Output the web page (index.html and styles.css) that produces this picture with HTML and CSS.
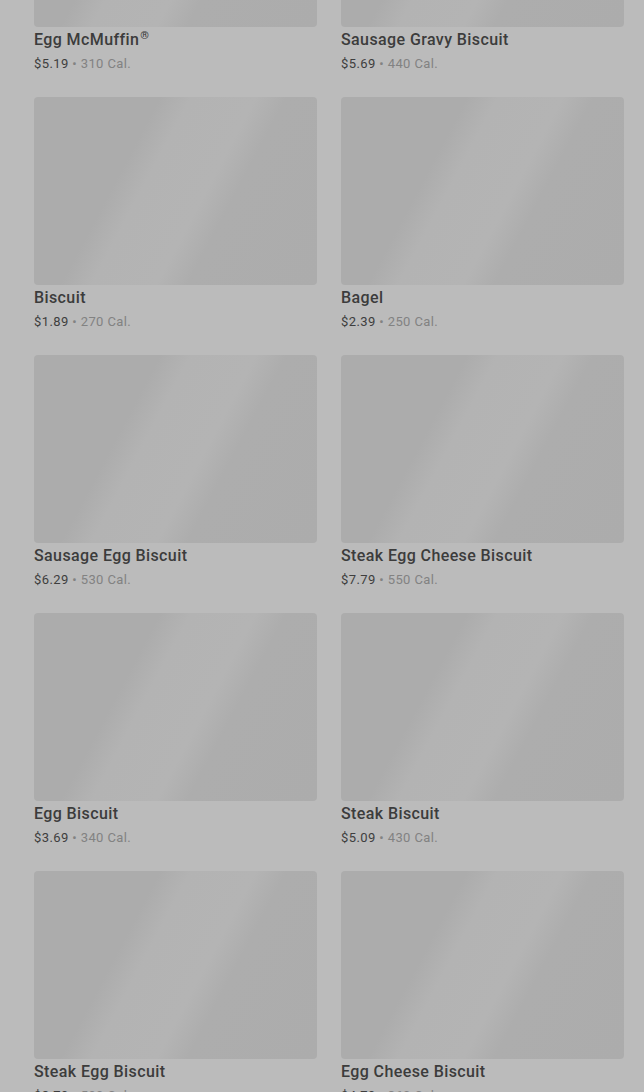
FILE: index.html
```html
<!DOCTYPE html>
<html>
<head>
<meta charset="utf-8">
<link rel="stylesheet" href="styles.css">
</head>
<body>
<main class="grid">
  <div class="card"><div class="img"></div><div class="title">Egg McMuffin<sup>®</sup></div><div class="meta"><span class="price">$5.19</span> • 310 Cal.</div></div>
  <div class="card"><div class="img"></div><div class="title">Sausage Gravy Biscuit</div><div class="meta"><span class="price">$5.69</span> • 440 Cal.</div></div>
  <div class="card"><div class="img"></div><div class="title">Biscuit</div><div class="meta"><span class="price">$1.89</span> • 270 Cal.</div></div>
  <div class="card"><div class="img"></div><div class="title">Bagel</div><div class="meta"><span class="price">$2.39</span> • 250 Cal.</div></div>
  <div class="card"><div class="img"></div><div class="title">Sausage Egg Biscuit</div><div class="meta"><span class="price">$6.29</span> • 530 Cal.</div></div>
  <div class="card"><div class="img"></div><div class="title">Steak Egg Cheese Biscuit</div><div class="meta"><span class="price">$7.79</span> • 550 Cal.</div></div>
  <div class="card"><div class="img"></div><div class="title">Egg Biscuit</div><div class="meta"><span class="price">$3.69</span> • 340 Cal.</div></div>
  <div class="card"><div class="img"></div><div class="title">Steak Biscuit</div><div class="meta"><span class="price">$5.09</span> • 430 Cal.</div></div>
  <div class="card"><div class="img"></div><div class="title">Steak Egg Biscuit</div><div class="meta"><span class="price">$8.79</span> • 590 Cal.</div></div>
  <div class="card"><div class="img"></div><div class="title">Egg Cheese Biscuit</div><div class="meta"><span class="price">$4.79</span> • 360 Cal.</div></div>
</main>
</body>
</html>
```
FILE: styles.css
```css
html, body {
  margin: 0;
  padding: 0;
  background: #bbbbbb;
  overflow: hidden;
}
body {
  font-family: Roboto, "Liberation Sans", sans-serif;
  height: 1092px;
}
.grid {
  display: grid;
  grid-template-columns: 283px 283px;
  column-gap: 24px;
  row-gap: 23px;
  padding: 0 20px 0 34px;
  margin-top: -161px;
}
.card {
  display: flex;
  flex-direction: column;
}
.img {
  height: 188px;
  border-radius: 4px;
  background: linear-gradient(118deg, #acacac 0%, #acacac 33%, #b3b3b3 41%, #b4b4b4 58%, #adadad 66%, #acacac 100%);
}
.title {
  margin-top: 1px;
  font-size: 16px;
  line-height: 24px;
  font-weight: 500;
  color: #3c3c3c;
  letter-spacing: 0.4px;
}
.title sup {
  font-size: 11px;
  vertical-align: top;
  line-height: 16px;
  margin-left: 1px;
}
.meta {
  margin-top: 2px;
  font-size: 13px;
  line-height: 20px;
  color: #828282;
  letter-spacing: 0.4px;
}
.price {
  color: #3e3e3e;
}
```
